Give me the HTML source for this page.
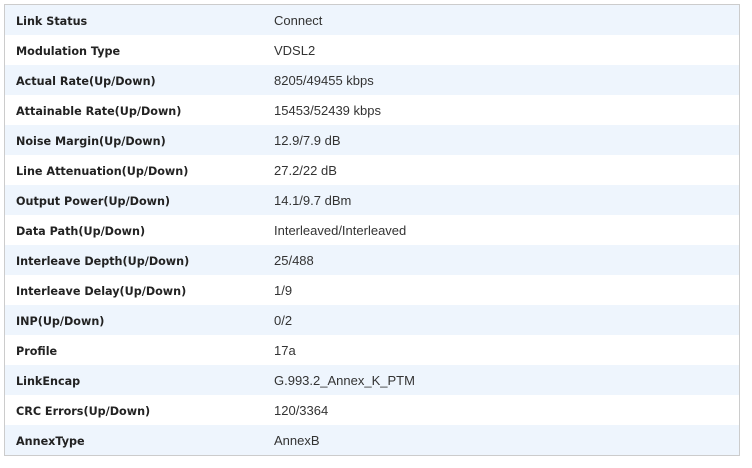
<!DOCTYPE html>
<html><head><style>
body{margin:0;background:#fff;font-family:"Liberation Sans",sans-serif;font-size:13px;color:#333}
.box{position:absolute;left:4px;top:4px;width:734px;border:1px solid #ccc}
.r{height:30px;line-height:32px;position:relative}
.r:nth-child(odd){background:#eef5fd}
.l{position:absolute;left:11px;top:1px;font-weight:bold;color:#222;font-family:"DejaVu Sans",sans-serif;font-size:11.2px}
.v{position:absolute;left:269px;color:#333}
</style></head><body><div class="box">
<div class="r"><span class="l">Link Status</span><span class="v">Connect</span></div>
<div class="r"><span class="l">Modulation Type</span><span class="v">VDSL2</span></div>
<div class="r"><span class="l">Actual Rate(Up/Down)</span><span class="v">8205/49455 kbps</span></div>
<div class="r"><span class="l">Attainable Rate(Up/Down)</span><span class="v">15453/52439 kbps</span></div>
<div class="r"><span class="l">Noise Margin(Up/Down)</span><span class="v">12.9/7.9 dB</span></div>
<div class="r"><span class="l">Line Attenuation(Up/Down)</span><span class="v">27.2/22 dB</span></div>
<div class="r"><span class="l">Output Power(Up/Down)</span><span class="v">14.1/9.7 dBm</span></div>
<div class="r"><span class="l">Data Path(Up/Down)</span><span class="v">Interleaved/Interleaved</span></div>
<div class="r"><span class="l">Interleave Depth(Up/Down)</span><span class="v">25/488</span></div>
<div class="r"><span class="l">Interleave Delay(Up/Down)</span><span class="v">1/9</span></div>
<div class="r"><span class="l">INP(Up/Down)</span><span class="v">0/2</span></div>
<div class="r"><span class="l">Profile</span><span class="v">17a</span></div>
<div class="r"><span class="l">LinkEncap</span><span class="v">G.993.2_Annex_K_PTM</span></div>
<div class="r"><span class="l">CRC Errors(Up/Down)</span><span class="v">120/3364</span></div>
<div class="r"><span class="l">AnnexType</span><span class="v">AnnexB</span></div>
</div></body></html>
